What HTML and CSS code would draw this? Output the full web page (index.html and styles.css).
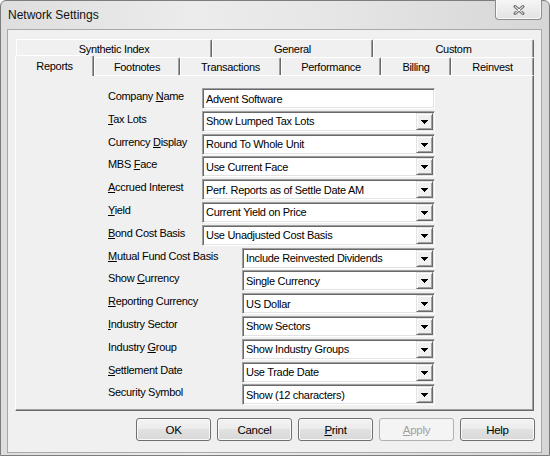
FILE: index.html
```html
<!DOCTYPE html>
<html>
<head>
<meta charset="utf-8">
<link rel="stylesheet" href="styles.css">
</head>
<body>
<div class="window">
  <div class="titlebar">
    <span class="title">Network Settings</span>
    <div class="close">
      <svg width="12" height="10" viewBox="0 0 12 10"><path d="M2 1.5 L10 8.5 M10 1.5 L2 8.5" stroke="#7b7b7b" stroke-width="3" stroke-linecap="round" fill="none"/><path d="M2 1.5 L10 8.5 M10 1.5 L2 8.5" stroke="#fdfdfd" stroke-width="1" fill="none"/></svg>
    </div>
  </div>
  <div class="client">
    <div class="tabs">
      <div class="tabrow top">
        <div class="tab t196">Synthetic Index</div>
        <div class="tab t161">General</div>
        <div class="tab t161">Custom</div>
      </div>
      <div class="tabrow bottom">
        <div class="tab sel t79">Reports</div>
        <div class="tab t86">Footnotes</div>
        <div class="tab t101">Transactions</div>
        <div class="tab t100">Performance</div>
        <div class="tab t70">Billing</div>
        <div class="tab t83">Reinvest</div>
      </div>
      <div class="panel">
        <div class="form">
          <div class="row"><span class="lbl">Company <u>N</u>ame</span><div class="field">Advent Software</div></div>
          <div class="row"><span class="lbl"><u>T</u>ax Lots</span><div class="field combo"><span>Show Lumped Tax Lots</span><span class="drop"><svg width="7" height="4" viewBox="0 0 7 4"><path d="M0 0h7v1h-1v1h-1v1h-1v1h-1v-1h-1v-1h-1v-1h-1z" fill="#000"/></svg></span></div></div>
          <div class="row"><span class="lbl">Currency <u>D</u>isplay</span><div class="field combo"><span>Round To Whole Unit</span><span class="drop"><svg width="7" height="4" viewBox="0 0 7 4"><path d="M0 0h7v1h-1v1h-1v1h-1v1h-1v-1h-1v-1h-1v-1h-1z" fill="#000"/></svg></span></div></div>
          <div class="row"><span class="lbl">MBS <u>F</u>ace</span><div class="field combo"><span>Use Current Face</span><span class="drop"><svg width="7" height="4" viewBox="0 0 7 4"><path d="M0 0h7v1h-1v1h-1v1h-1v1h-1v-1h-1v-1h-1v-1h-1z" fill="#000"/></svg></span></div></div>
          <div class="row"><span class="lbl"><u>A</u>ccrued Interest</span><div class="field combo"><span>Perf. Reports as of Settle Date AM</span><span class="drop"><svg width="7" height="4" viewBox="0 0 7 4"><path d="M0 0h7v1h-1v1h-1v1h-1v1h-1v-1h-1v-1h-1v-1h-1z" fill="#000"/></svg></span></div></div>
          <div class="row"><span class="lbl"><u>Y</u>ield</span><div class="field combo"><span>Current Yield on Price</span><span class="drop"><svg width="7" height="4" viewBox="0 0 7 4"><path d="M0 0h7v1h-1v1h-1v1h-1v1h-1v-1h-1v-1h-1v-1h-1z" fill="#000"/></svg></span></div></div>
          <div class="row"><span class="lbl"><u>B</u>ond Cost Basis</span><div class="field combo"><span>Use Unadjusted Cost Basis</span><span class="drop"><svg width="7" height="4" viewBox="0 0 7 4"><path d="M0 0h7v1h-1v1h-1v1h-1v1h-1v-1h-1v-1h-1v-1h-1z" fill="#000"/></svg></span></div></div>
          <div class="row"><span class="lbl"><u>M</u>utual Fund Cost Basis</span><div class="field combo narrow"><span>Include Reinvested Dividends</span><span class="drop"><svg width="7" height="4" viewBox="0 0 7 4"><path d="M0 0h7v1h-1v1h-1v1h-1v1h-1v-1h-1v-1h-1v-1h-1z" fill="#000"/></svg></span></div></div>
          <div class="row"><span class="lbl">Show <u>C</u>urrency</span><div class="field combo narrow"><span>Single Currency</span><span class="drop"><svg width="7" height="4" viewBox="0 0 7 4"><path d="M0 0h7v1h-1v1h-1v1h-1v1h-1v-1h-1v-1h-1v-1h-1z" fill="#000"/></svg></span></div></div>
          <div class="row"><span class="lbl"><u>R</u>eporting Currency</span><div class="field combo narrow"><span>US Dollar</span><span class="drop"><svg width="7" height="4" viewBox="0 0 7 4"><path d="M0 0h7v1h-1v1h-1v1h-1v1h-1v-1h-1v-1h-1v-1h-1z" fill="#000"/></svg></span></div></div>
          <div class="row"><span class="lbl"><u>I</u>ndustry Sector</span><div class="field combo narrow"><span>Show Sectors</span><span class="drop"><svg width="7" height="4" viewBox="0 0 7 4"><path d="M0 0h7v1h-1v1h-1v1h-1v1h-1v-1h-1v-1h-1v-1h-1z" fill="#000"/></svg></span></div></div>
          <div class="row"><span class="lbl">Industry <u>G</u>roup</span><div class="field combo narrow"><span>Show Industry Groups</span><span class="drop"><svg width="7" height="4" viewBox="0 0 7 4"><path d="M0 0h7v1h-1v1h-1v1h-1v1h-1v-1h-1v-1h-1v-1h-1z" fill="#000"/></svg></span></div></div>
          <div class="row"><span class="lbl"><u>S</u>ettlement Date</span><div class="field combo narrow"><span>Use Trade Date</span><span class="drop"><svg width="7" height="4" viewBox="0 0 7 4"><path d="M0 0h7v1h-1v1h-1v1h-1v1h-1v-1h-1v-1h-1v-1h-1z" fill="#000"/></svg></span></div></div>
          <div class="row"><span class="lbl">Security Symbol</span><div class="field combo narrow"><span>Show (12 characters)</span><span class="drop"><svg width="7" height="4" viewBox="0 0 7 4"><path d="M0 0h7v1h-1v1h-1v1h-1v1h-1v-1h-1v-1h-1v-1h-1z" fill="#000"/></svg></span></div></div>
        </div>
      </div>
    </div>
    <div class="buttons">
      <div class="btn">OK</div>
      <div class="btn">Cancel</div>
      <div class="btn"><span><u>P</u>rint</span></div>
      <div class="btn disabled"><span><u>A</u>pply</span></div>
      <div class="btn">Help</div>
    </div>
  </div>
</div>
</body>
</html>
```
FILE: styles.css
```css
html, body {
  margin: 0;
  padding: 0;
  background: #ffffff;
}
body {
  font-family: "Liberation Sans", Arial, sans-serif;
  font-size: 11px;
  letter-spacing: -0.3px;
  color: #000;
}
.window {
  width: 550px;
  height: 456px;
  box-sizing: border-box;
  border: 1px solid #7d7d7d;
  border-radius: 6px 6px 0 0;
  background: linear-gradient(to right, #dedede 0%, #ececec 35%, #e6e6e6 60%, #d6d6d6 100%);
  display: flex;
  flex-direction: column;
  padding: 0 7px 2px 6px;
}
.titlebar {
  height: 28px;
  flex: none;
  display: flex;
  justify-content: space-between;
  align-items: flex-start;
}
.title {
  margin: 6px 0 0 1px;
  line-height: 16px;
  font-size: 12px;
  letter-spacing: 0;
  color: #111;
}
.close {
  width: 47px;
  height: 20px;
  margin-top: -1px;
  box-sizing: border-box;
  border: 1px solid #8e8e8e;
  border-top: none;
  border-radius: 0 0 4px 4px;
  background: linear-gradient(#f6f6f6, #e2e2e2);
  box-shadow: inset 1px 0 #fbfbfb, inset -1px -1px #f8f8f8;
  display: flex;
  align-items: center;
  justify-content: center;
}
.close svg { display: block; }
.client {
  flex: 1;
  background: #f0f0f0;
  border: 1px solid #a8a8a8;
  display: flex;
  flex-direction: column;
}
.tabs {
  margin: 9px 7px 0 7px;
}
.tabrow {
  display: flex;
  height: 18px;
  align-items: flex-end;
}
.tabrow.top { padding-left: 1px; }
.tab {
  box-sizing: border-box;
  height: 18px;
  flex: none;
  border-top: 1px solid #fff;
  border-left: 1px solid #fff;
  border-right: 1px solid #696969;
  box-shadow: inset -1px 0 #a0a0a0;
  border-radius: 2px 2px 0 0;
  text-align: center;
  line-height: 19px;
  background: #f0f0f0;
  white-space: nowrap;
}
.tab.sel {
  height: 21px;
  margin-bottom: -1px;
  position: relative;
  z-index: 1;
  line-height: 20px;
}
.t196 { width: 196px; }
.t161 { width: 161px; }
.t79 { width: 79px; }
.t86 { width: 86px; }
.t101 { width: 101px; }
.t100 { width: 100px; }
.t70 { width: 70px; }
.t83 { width: 83px; }
.panel {
  height: 336px;
  box-sizing: border-box;
  border: 1px solid;
  border-color: #fff #696969 #696969 #fff;
  box-shadow: inset -1px -1px #a0a0a0;
  padding: 12px 0 0 92px;
}
.form {
  width: 327px;
  display: grid;
  grid-auto-rows: 22.8px;
}
.row {
  display: flex;
  justify-content: space-between;
  align-items: flex-start;
}
.lbl {
  line-height: 16px;
  white-space: nowrap;
}
.field {
  box-sizing: border-box;
  height: 21px;
  width: 233px;
  border: 1px solid;
  border-color: #a0a0a0 #fff #fff #a0a0a0;
  box-shadow: inset 1px 1px #696969, inset -1px -1px #e3e3e3;
  background: #fff;
  display: flex;
  align-items: center;
  padding: 1px 1px 1px 3px;
  white-space: nowrap;
}
.field.narrow { width: 193px; }
.drop {
  margin-left: auto;
  width: 17px;
  height: 17px;
  box-sizing: border-box;
  border: 1px solid;
  border-color: #e3e3e3 #696969 #696969 #e3e3e3;
  box-shadow: inset 1px 1px #fff, inset -1px -1px #a0a0a0;
  background: #f0f0f0;
  display: flex;
  align-items: center;
  justify-content: center;
  padding-top: 1px;
}
.drop svg { display: block; }
.buttons {
  display: flex;
  justify-content: flex-end;
  gap: 6px;
  margin: 7px 6px 0 0;
}
.btn {
  width: 75px;
  height: 23px;
  box-sizing: border-box;
  border: 1px solid #707070;
  border-radius: 3px;
  background: linear-gradient(#f3f3f3, #ebebeb 50%, #e1e1e1 50%, #d9d9d9);
  box-shadow: inset 0 0 0 1px #fafafa;
  display: flex;
  align-items: center;
  justify-content: center;
  font-size: 11.5px;
}
.btn.disabled {
  color: #a0a0a0;
  border-color: #adb2b5;
  background: #f4f4f4;
  box-shadow: none;
}
```
